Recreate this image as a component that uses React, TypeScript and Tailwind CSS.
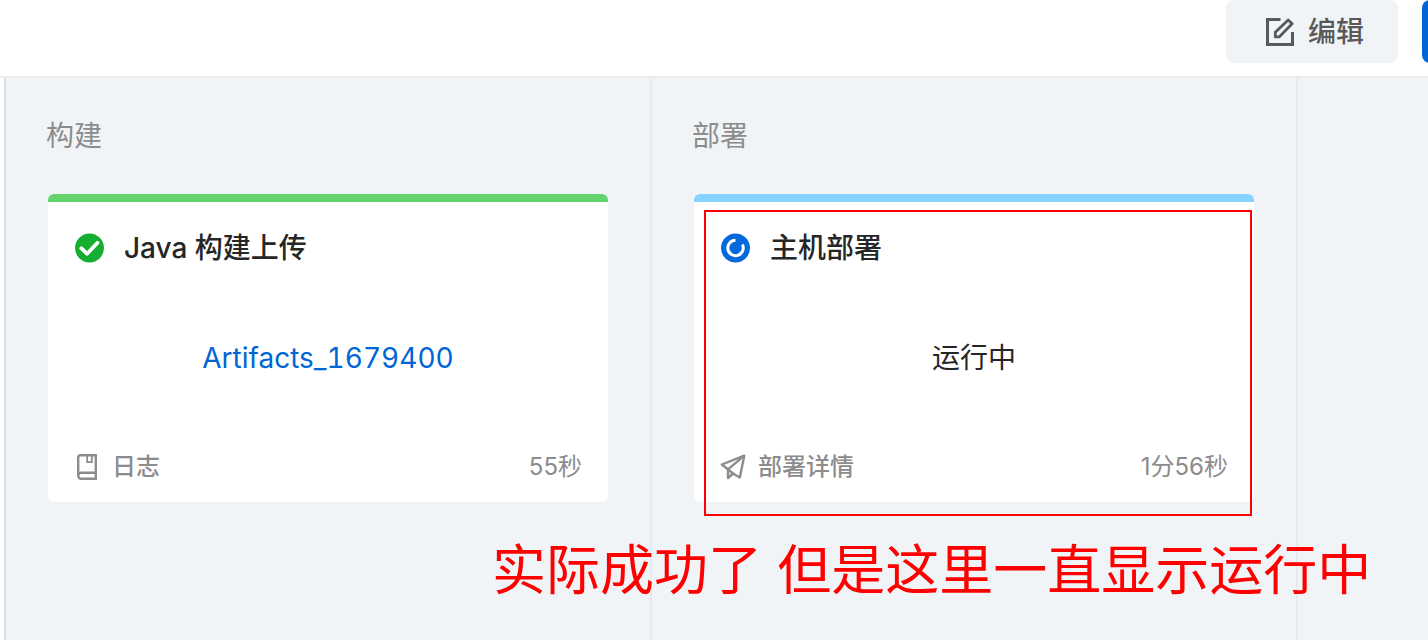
import type { ReactNode } from "react";

interface Job {
  name: string;
  status: "success" | "running";
  body: ReactNode;
  link: { label: string; icon: ReactNode };
  duration: string;
}

interface Stage {
  title: string;
  job: Job;
}

function EditIcon() {
  return (
    <svg viewBox="0 0 28 28" className="size-7" fill="none" stroke="currentColor" strokeWidth="3" aria-hidden="true">
      <path d="M14.5 1.5H1.5v25h25V14" />
      <path d="M9.3 18.8v-4.6L22.2 1.9l3.9 3.9L13.4 18.8z" strokeWidth="2.8" strokeLinejoin="round" />
    </svg>
  );
}

function BookIcon() {
  return (
    <svg viewBox="0 0 20 26" className="h-[26px] w-5" fill="none" stroke="currentColor" strokeWidth="2.4" aria-hidden="true">
      <path d="M18.8 19V1.2H3.2a2 2 0 0 0-2 2v18.6a3 3 0 0 0 3 3h14.6v-6H4.2a3 3 0 0 0-3 3" />
      <path d="M10.2 1v7.2h4.6V1" strokeWidth="1.8" />
    </svg>
  );
}

function PlaneIcon() {
  return (
    <svg viewBox="0 0 26 26" className="size-[26px]" fill="none" stroke="currentColor" strokeWidth="2.4" strokeLinejoin="round" aria-hidden="true">
      <path d="M24.3 1.7 1.8 10.5l6.2 4.8v8.7l5-4.5 6.8 4z" />
      <path d="M24.3 1.7 8 15.3l5 4.2" />
    </svg>
  );
}

function StatusIcon({ status }: { status: Job["status"] }) {
  if (status === "success") {
    return (
      <svg viewBox="0 0 30 30" className="size-[30px]" fill="none" role="img" aria-label="成功">
        <circle cx="15.5" cy="15" r="14.5" fill="#16ae31" />
        <path d="m7.3 15.2 5.8 5.6L23.5 9.8" stroke="#fff" strokeWidth="3.8" strokeLinecap="round" strokeLinejoin="round" />
      </svg>
    );
  }
  return (
    <svg viewBox="0 0 30 30" className="size-[30px]" fill="none" role="img" aria-label="运行中">
      <circle cx="15.5" cy="15" r="14.5" fill="#0369dc" />
      <path d="M15.5 7.3a7.7 7.7 0 1 0 6.9 4.2" stroke="#fff" strokeWidth="3" />
    </svg>
  );
}

const stages: Stage[] = [
  {
    title: "构建",
    job: {
      name: "Java 构建上传",
      status: "success",
      body: (
        <a href="#artifacts" className="text-[#0066d6]">
          Artifacts_1679400
        </a>
      ),
      link: { label: "日志", icon: <BookIcon /> },
      duration: "55秒",
    },
  },
  {
    title: "部署",
    job: {
      name: "主机部署",
      status: "running",
      body: "运行中",
      link: { label: "部署详情", icon: <PlaneIcon /> },
      duration: "1分56秒",
    },
  },
];

const barClass = {
  success: "bg-[#64d26d]",
  running: "bg-[#88d2ff]",
};

function JobCard({ job }: { job: Job }) {
  return (
    <article className="mx-0.5 overflow-hidden rounded-md bg-white">
      <div className={`h-2 ${barClass[job.status]}`} />
      <div className="flex flex-col px-[26px] pt-6 pb-3.5">
        <h3 className="flex items-center gap-5 text-[28px] leading-11 font-medium text-[#262626]">
          <StatusIcon status={job.status} />
          {job.name}
        </h3>
        <div className="py-[66px] text-center text-[28px] leading-11 text-[#262626] tabular-nums">{job.body}</div>
        <div className="flex items-center justify-between text-2xl leading-[42px] text-[#8c8c8c]">
          <a href="#detail" className="flex items-center gap-3 font-medium">
            <span className="flex w-[26px] justify-center">{job.link.icon}</span>
            {job.link.label}
          </a>
          <span>{job.duration}</span>
        </div>
      </div>
    </article>
  );
}

export default function App() {
  return (
    <div className="flex min-h-screen flex-col bg-white font-['Inter','Noto_Sans_CJK_SC',sans-serif]" lang="zh-CN">
      <header className="flex h-[78px] items-start justify-end gap-6 overflow-hidden border-b-2 border-[#e9edf0]">
        <button
          type="button"
          className="flex h-[63px] w-[172px] shrink-0 items-center justify-center gap-3.5 rounded-lg bg-[#f0f4f7] pl-1.5 text-[28px] font-medium text-[#595959]"
        >
          <EditIcon />
          编辑
        </button>
        <button type="button" aria-label="运行" className="-mr-[154px] h-[63px] w-40 shrink-0 rounded-lg bg-[#0066d6]" />
      </header>

      <main className="relative ml-1 flex grow overflow-hidden border-l-2 border-[#dbe1e6] bg-[#f0f4f7]">
        {stages.map((stage) => (
          <section key={stage.title} className="w-[646px] shrink-0 border-r-2 border-[#e6eaed] px-10 pt-9">
            <h2 className="mb-9 text-[28px] leading-11 text-[#8c8c8c]">{stage.title}</h2>
            <JobCard job={stage.job} />
          </section>
        ))}

        {/* reviewer's markup over the board */}
        <div className="pointer-events-none absolute top-[132px] left-[698px] h-[306px] w-[548px] border-2 border-[#ff0000]" />
        <p className="pointer-events-none absolute top-[453px] left-[486px] text-[54px] leading-20 whitespace-nowrap text-[#ff0000]">
          实际成功了 但是这里一直显示运行中
        </p>
      </main>
    </div>
  );
}
